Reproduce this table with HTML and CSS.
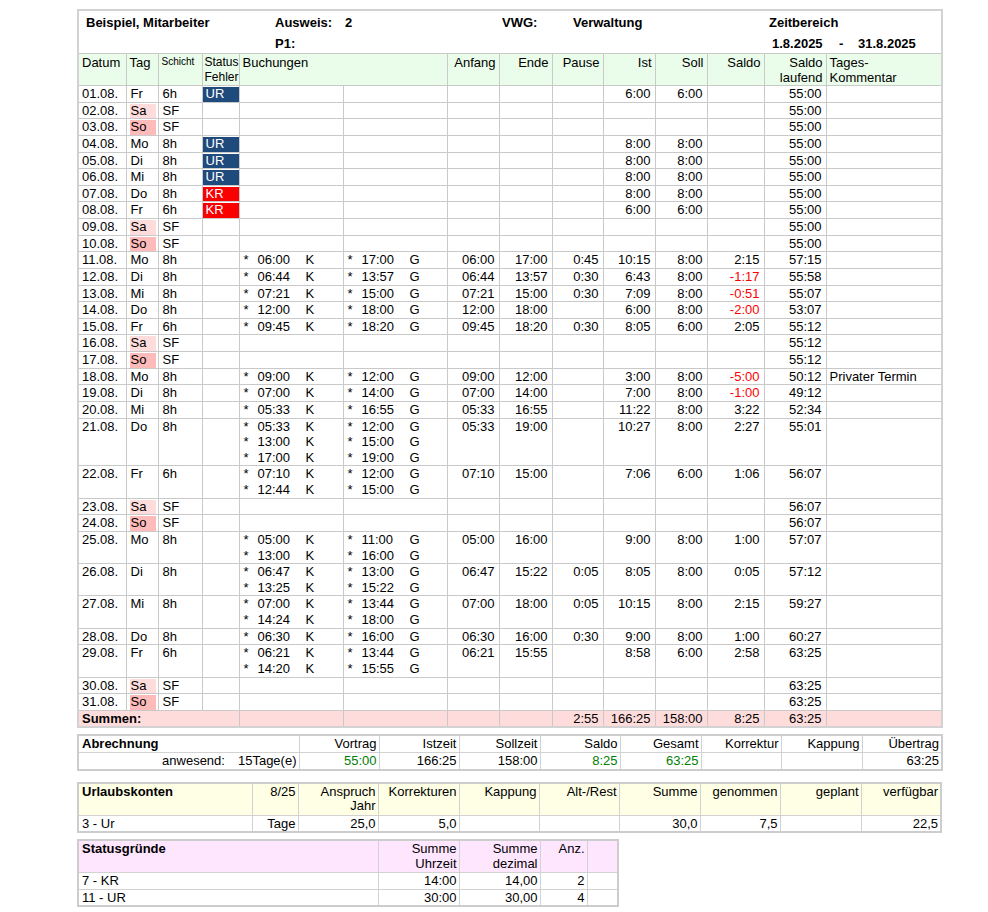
FILE: index.html
```html
<!DOCTYPE html>
<html lang="de">
<head>
<meta charset="utf-8">
<title>Zeitnachweis</title>
<link rel="stylesheet" href="styles.css">
</head>
<body>
<table class="sheet">
<colgroup>
<col class="w48"><col class="w32"><col class="w44"><col class="w37"><col class="w104"><col class="w104"><col class="w52"><col class="w53"><col class="w51"><col class="w52"><col class="w52"><col class="w57"><col class="w62"><col class="w116">
</colgroup>
<tr><td class="head" colspan="14">
  <div class="hrow1"><span>Beispiel, Mitarbeiter</span><span>Ausweis:</span><span>2</span><span>VWG:</span><span>Verwaltung</span><span>Zeitbereich</span></div>
  <div class="hrow2"><span></span><span>P1:</span><span>1.8.2025</span><span>-</span><span>31.8.2025</span></div>
</td></tr>
<tr class="ch">
  <td>Datum</td><td>Tag</td><td class="small">Schicht</td><td class="stat">Status<br>Fehler</td><td colspan="2">Buchungen</td>
  <td class="r">Anfang</td><td class="r">Ende</td><td class="r">Pause</td><td class="r">Ist</td><td class="r">Soll</td><td class="r">Saldo</td><td class="r">Saldo<br>laufend</td><td>Tages-<br>Kommentar</td>
</tr>

<tr><td>01.08.</td><td class="t"><div class="tg">Fr</div></td><td class="s">6h</td><td class="x"><div class="ur">UR</div></td><td></td><td></td><td></td><td></td><td></td><td class="n">6:00</td><td class="n">6:00</td><td></td><td class="n">55:00</td><td></td></tr>
<tr><td>02.08.</td><td class="t"><div class="tg sa">Sa</div></td><td class="s">SF</td><td></td><td></td><td></td><td></td><td></td><td></td><td></td><td></td><td></td><td class="n">55:00</td><td></td></tr>
<tr><td>03.08.</td><td class="t"><div class="tg so">So</div></td><td class="s">SF</td><td></td><td></td><td></td><td></td><td></td><td></td><td></td><td></td><td></td><td class="n">55:00</td><td></td></tr>
<tr><td>04.08.</td><td class="t"><div class="tg">Mo</div></td><td class="s">8h</td><td class="x"><div class="ur">UR</div></td><td></td><td></td><td></td><td></td><td></td><td class="n">8:00</td><td class="n">8:00</td><td></td><td class="n">55:00</td><td></td></tr>
<tr><td>05.08.</td><td class="t"><div class="tg">Di</div></td><td class="s">8h</td><td class="x"><div class="ur">UR</div></td><td></td><td></td><td></td><td></td><td></td><td class="n">8:00</td><td class="n">8:00</td><td></td><td class="n">55:00</td><td></td></tr>
<tr><td>06.08.</td><td class="t"><div class="tg">Mi</div></td><td class="s">8h</td><td class="x"><div class="ur">UR</div></td><td></td><td></td><td></td><td></td><td></td><td class="n">8:00</td><td class="n">8:00</td><td></td><td class="n">55:00</td><td></td></tr>
<tr><td>07.08.</td><td class="t"><div class="tg">Do</div></td><td class="s">8h</td><td class="x"><div class="kr">KR</div></td><td></td><td></td><td></td><td></td><td></td><td class="n">8:00</td><td class="n">8:00</td><td></td><td class="n">55:00</td><td></td></tr>
<tr><td>08.08.</td><td class="t"><div class="tg">Fr</div></td><td class="s">6h</td><td class="x"><div class="kr">KR</div></td><td></td><td></td><td></td><td></td><td></td><td class="n">6:00</td><td class="n">6:00</td><td></td><td class="n">55:00</td><td></td></tr>
<tr><td>09.08.</td><td class="t"><div class="tg sa">Sa</div></td><td class="s">SF</td><td></td><td></td><td></td><td></td><td></td><td></td><td></td><td></td><td></td><td class="n">55:00</td><td></td></tr>
<tr><td>10.08.</td><td class="t"><div class="tg so">So</div></td><td class="s">SF</td><td></td><td></td><td></td><td></td><td></td><td></td><td></td><td></td><td></td><td class="n">55:00</td><td></td></tr>
<tr><td>11.08.</td><td class="t"><div class="tg">Mo</div></td><td class="s">8h</td><td></td>
  <td class="bu"><div class="b"><span>*</span><span>06:00</span><span>K</span></div></td>
  <td class="bu"><div class="b"><span>*</span><span>17:00</span><span>G</span></div></td>
  <td class="n">06:00</td><td class="n">17:00</td><td class="n">0:45</td><td class="n">10:15</td><td class="n">8:00</td><td class="n">2:15</td><td class="n">57:15</td><td></td></tr>
<tr><td>12.08.</td><td class="t"><div class="tg">Di</div></td><td class="s">8h</td><td></td>
  <td class="bu"><div class="b"><span>*</span><span>06:44</span><span>K</span></div></td>
  <td class="bu"><div class="b"><span>*</span><span>13:57</span><span>G</span></div></td>
  <td class="n">06:44</td><td class="n">13:57</td><td class="n">0:30</td><td class="n">6:43</td><td class="n">8:00</td><td class="n neg">-1:17</td><td class="n">55:58</td><td></td></tr>
<tr><td>13.08.</td><td class="t"><div class="tg">Mi</div></td><td class="s">8h</td><td></td>
  <td class="bu"><div class="b"><span>*</span><span>07:21</span><span>K</span></div></td>
  <td class="bu"><div class="b"><span>*</span><span>15:00</span><span>G</span></div></td>
  <td class="n">07:21</td><td class="n">15:00</td><td class="n">0:30</td><td class="n">7:09</td><td class="n">8:00</td><td class="n neg">-0:51</td><td class="n">55:07</td><td></td></tr>
<tr><td>14.08.</td><td class="t"><div class="tg">Do</div></td><td class="s">8h</td><td></td>
  <td class="bu"><div class="b"><span>*</span><span>12:00</span><span>K</span></div></td>
  <td class="bu"><div class="b"><span>*</span><span>18:00</span><span>G</span></div></td>
  <td class="n">12:00</td><td class="n">18:00</td><td></td><td class="n">6:00</td><td class="n">8:00</td><td class="n neg">-2:00</td><td class="n">53:07</td><td></td></tr>
<tr><td>15.08.</td><td class="t"><div class="tg">Fr</div></td><td class="s">6h</td><td></td>
  <td class="bu"><div class="b"><span>*</span><span>09:45</span><span>K</span></div></td>
  <td class="bu"><div class="b"><span>*</span><span>18:20</span><span>G</span></div></td>
  <td class="n">09:45</td><td class="n">18:20</td><td class="n">0:30</td><td class="n">8:05</td><td class="n">6:00</td><td class="n">2:05</td><td class="n">55:12</td><td></td></tr>
<tr><td>16.08.</td><td class="t"><div class="tg sa">Sa</div></td><td class="s">SF</td><td></td><td></td><td></td><td></td><td></td><td></td><td></td><td></td><td></td><td class="n">55:12</td><td></td></tr>
<tr><td>17.08.</td><td class="t"><div class="tg so">So</div></td><td class="s">SF</td><td></td><td></td><td></td><td></td><td></td><td></td><td></td><td></td><td></td><td class="n">55:12</td><td></td></tr>
<tr><td>18.08.</td><td class="t"><div class="tg">Mo</div></td><td class="s">8h</td><td></td>
  <td class="bu"><div class="b"><span>*</span><span>09:00</span><span>K</span></div></td>
  <td class="bu"><div class="b"><span>*</span><span>12:00</span><span>G</span></div></td>
  <td class="n">09:00</td><td class="n">12:00</td><td></td><td class="n">3:00</td><td class="n">8:00</td><td class="n neg">-5:00</td><td class="n">50:12</td><td>Privater Termin</td></tr>
<tr><td>19.08.</td><td class="t"><div class="tg">Di</div></td><td class="s">8h</td><td></td>
  <td class="bu"><div class="b"><span>*</span><span>07:00</span><span>K</span></div></td>
  <td class="bu"><div class="b"><span>*</span><span>14:00</span><span>G</span></div></td>
  <td class="n">07:00</td><td class="n">14:00</td><td></td><td class="n">7:00</td><td class="n">8:00</td><td class="n neg">-1:00</td><td class="n">49:12</td><td></td></tr>
<tr><td>20.08.</td><td class="t"><div class="tg">Mi</div></td><td class="s">8h</td><td></td>
  <td class="bu"><div class="b"><span>*</span><span>05:33</span><span>K</span></div></td>
  <td class="bu"><div class="b"><span>*</span><span>16:55</span><span>G</span></div></td>
  <td class="n">05:33</td><td class="n">16:55</td><td></td><td class="n">11:22</td><td class="n">8:00</td><td class="n">3:22</td><td class="n">52:34</td><td></td></tr>
<tr><td>21.08.</td><td class="t"><div class="tg">Do</div></td><td class="s">8h</td><td></td>
  <td class="bu"><div class="b"><span>*</span><span>05:33</span><span>K</span><span>*</span><span>13:00</span><span>K</span><span>*</span><span>17:00</span><span>K</span></div></td>
  <td class="bu"><div class="b"><span>*</span><span>12:00</span><span>G</span><span>*</span><span>15:00</span><span>G</span><span>*</span><span>19:00</span><span>G</span></div></td>
  <td class="n">05:33</td><td class="n">19:00</td><td></td><td class="n">10:27</td><td class="n">8:00</td><td class="n">2:27</td><td class="n">55:01</td><td></td></tr>
<tr><td>22.08.</td><td class="t"><div class="tg">Fr</div></td><td class="s">6h</td><td></td>
  <td class="bu"><div class="b"><span>*</span><span>07:10</span><span>K</span><span>*</span><span>12:44</span><span>K</span></div></td>
  <td class="bu"><div class="b"><span>*</span><span>12:00</span><span>G</span><span>*</span><span>15:00</span><span>G</span></div></td>
  <td class="n">07:10</td><td class="n">15:00</td><td></td><td class="n">7:06</td><td class="n">6:00</td><td class="n">1:06</td><td class="n">56:07</td><td></td></tr>
<tr><td>23.08.</td><td class="t"><div class="tg sa">Sa</div></td><td class="s">SF</td><td></td><td></td><td></td><td></td><td></td><td></td><td></td><td></td><td></td><td class="n">56:07</td><td></td></tr>
<tr><td>24.08.</td><td class="t"><div class="tg so">So</div></td><td class="s">SF</td><td></td><td></td><td></td><td></td><td></td><td></td><td></td><td></td><td></td><td class="n">56:07</td><td></td></tr>
<tr><td>25.08.</td><td class="t"><div class="tg">Mo</div></td><td class="s">8h</td><td></td>
  <td class="bu"><div class="b"><span>*</span><span>05:00</span><span>K</span><span>*</span><span>13:00</span><span>K</span></div></td>
  <td class="bu"><div class="b"><span>*</span><span>11:00</span><span>G</span><span>*</span><span>16:00</span><span>G</span></div></td>
  <td class="n">05:00</td><td class="n">16:00</td><td></td><td class="n">9:00</td><td class="n">8:00</td><td class="n">1:00</td><td class="n">57:07</td><td></td></tr>
<tr><td>26.08.</td><td class="t"><div class="tg">Di</div></td><td class="s">8h</td><td></td>
  <td class="bu"><div class="b"><span>*</span><span>06:47</span><span>K</span><span>*</span><span>13:25</span><span>K</span></div></td>
  <td class="bu"><div class="b"><span>*</span><span>13:00</span><span>G</span><span>*</span><span>15:22</span><span>G</span></div></td>
  <td class="n">06:47</td><td class="n">15:22</td><td class="n">0:05</td><td class="n">8:05</td><td class="n">8:00</td><td class="n">0:05</td><td class="n">57:12</td><td></td></tr>
<tr><td>27.08.</td><td class="t"><div class="tg">Mi</div></td><td class="s">8h</td><td></td>
  <td class="bu"><div class="b"><span>*</span><span>07:00</span><span>K</span><span>*</span><span>14:24</span><span>K</span></div></td>
  <td class="bu"><div class="b"><span>*</span><span>13:44</span><span>G</span><span>*</span><span>18:00</span><span>G</span></div></td>
  <td class="n">07:00</td><td class="n">18:00</td><td class="n">0:05</td><td class="n">10:15</td><td class="n">8:00</td><td class="n">2:15</td><td class="n">59:27</td><td></td></tr>
<tr><td>28.08.</td><td class="t"><div class="tg">Do</div></td><td class="s">8h</td><td></td>
  <td class="bu"><div class="b"><span>*</span><span>06:30</span><span>K</span></div></td>
  <td class="bu"><div class="b"><span>*</span><span>16:00</span><span>G</span></div></td>
  <td class="n">06:30</td><td class="n">16:00</td><td class="n">0:30</td><td class="n">9:00</td><td class="n">8:00</td><td class="n">1:00</td><td class="n">60:27</td><td></td></tr>
<tr><td>29.08.</td><td class="t"><div class="tg">Fr</div></td><td class="s">6h</td><td></td>
  <td class="bu"><div class="b"><span>*</span><span>06:21</span><span>K</span><span>*</span><span>14:20</span><span>K</span></div></td>
  <td class="bu"><div class="b"><span>*</span><span>13:44</span><span>G</span><span>*</span><span>15:55</span><span>G</span></div></td>
  <td class="n">06:21</td><td class="n">15:55</td><td></td><td class="n">8:58</td><td class="n">6:00</td><td class="n">2:58</td><td class="n">63:25</td><td></td></tr>
<tr><td>30.08.</td><td class="t"><div class="tg sa">Sa</div></td><td class="s">SF</td><td></td><td></td><td></td><td></td><td></td><td></td><td></td><td></td><td></td><td class="n">63:25</td><td></td></tr>
<tr><td>31.08.</td><td class="t"><div class="tg so">So</div></td><td class="s">SF</td><td></td><td></td><td></td><td></td><td></td><td></td><td></td><td></td><td></td><td class="n">63:25</td><td></td></tr>
<tr class="sum"><td colspan="4" class="bold">Summen:</td><td></td><td></td><td></td><td></td><td class="n">2:55</td><td class="n">166:25</td><td class="n">158:00</td><td class="n">8:25</td><td class="n">63:25</td><td></td></tr>
</table>

<table class="tbl abr">
<colgroup><col class="w221"><col class="w80"><col class="w80"><col class="w81"><col class="w80"><col class="w81"><col class="w80"><col class="w81"><col class="w80"></colgroup>
<tr><td class="bold">Abrechnung</td><td class="n">Vortrag</td><td class="n">Istzeit</td><td class="n">Sollzeit</td><td class="n">Saldo</td><td class="n">Gesamt</td><td class="n">Korrektur</td><td class="n">Kappung</td><td class="n">Übertrag</td></tr>
<tr><td class="n">anwesend:<span class="days">15Tage(e)</span></td><td class="n pos">55:00</td><td class="n">166:25</td><td class="n">158:00</td><td class="n pos">8:25</td><td class="n pos">63:25</td><td></td><td></td><td class="n">63:25</td></tr>
</table>

<table class="tbl url">
<colgroup><col class="w174"><col class="w46"><col class="w80"><col class="w81"><col class="w80"><col class="w80"><col class="w81"><col class="w80"><col class="w81"><col class="w80"></colgroup>
<tr class="yh"><td class="bold">Urlaubskonten</td><td class="n">8/25</td><td class="n">Anspruch<br>Jahr</td><td class="n">Korrekturen</td><td class="n">Kappung</td><td class="n">Alt-/Rest</td><td class="n">Summe</td><td class="n">genommen</td><td class="n">geplant</td><td class="n">verfügbar</td></tr>
<tr><td>3 - Ur</td><td class="n">Tage</td><td class="n">25,0</td><td class="n">5,0</td><td></td><td></td><td class="n">30,0</td><td class="n">7,5</td><td></td><td class="n">22,5</td></tr>
</table>

<table class="tbl stg">
<colgroup><col class="w300"><col class="w81"><col class="w81"><col class="w47"><col class="w31"></colgroup>
<tr class="ph"><td class="bold">Statusgründe</td><td class="n">Summe<br>Uhrzeit</td><td class="n">Summe<br>dezimal</td><td class="n">Anz.</td><td></td></tr>
<tr><td>7 - KR</td><td class="n">14:00</td><td class="n">14,00</td><td class="n">2</td><td></td></tr>
<tr><td>11 - UR</td><td class="n">30:00</td><td class="n">30,00</td><td class="n">4</td><td></td></tr>
</table>
</body>
</html>
```

FILE: styles.css
```css
html, body {
  margin: 0;
  background: #ffffff;
}
body {
  padding: 9px 0 0 77px;
  font-family: "Liberation Sans", Arial, sans-serif;
  font-size: 13px;
  color: #000000;
}

.w31 { width: 31px; } .w32 { width: 32px; } .w37 { width: 37px; } .w44 { width: 44px; }
.w46 { width: 46px; } .w47 { width: 47px; } .w48 { width: 48px; } .w51 { width: 51px; }
.w52 { width: 52px; } .w53 { width: 53px; } .w57 { width: 57px; } .w62 { width: 62px; }
.w80 { width: 80px; } .w81 { width: 81px; } .w104 { width: 104px; } .w116 { width: 116px; }
.w174 { width: 174px; } .w221 { width: 221px; } .w300 { width: 300px; }

.sheet {
  border-collapse: collapse;
  table-layout: fixed;
  width: 865px;
  border: 2px solid #d2d2d2;
}
.sheet td {
  border: 1px solid #c9c9c9;
  padding: 0 3px;
  line-height: 15.62px;
  vertical-align: top;
  white-space: nowrap;
  overflow: hidden;
}
.sheet td.head {
  padding: 4px 0 0 7px;
  height: 38px;
  font-weight: bold;
  line-height: 16px;
  border-bottom: 1px solid #c9c9c9;
}
.hrow1 {
  display: grid;
  grid-template-columns: 189px 70px 157px 71px 196px auto;
}
.hrow2 {
  display: grid;
  grid-template-columns: 189px 497px 67px 19px auto;
  margin-top: 5px;
}

.sheet tr.ch td {
  background: #eafcea;
  line-height: 15px;
  padding-top: 1px;
  height: 30px;
}
.sheet tr.ch td.small {
  font-size: 10px;
  line-height: 13px;
}
.sheet tr.ch td.stat {
  font-size: 12px;
  padding: 1px 0 0 2px;
}
.sheet td.r, .sheet td.n, .tbl td.n { text-align: right; }
.sheet td.n { padding-right: 4px; }
.sheet td.t, .sheet td.x { padding: 0; }
.sheet td.s { padding-left: 4px; }

.tg {
  margin: 1px 2px 0 3px;
  padding-left: 1px;
  line-height: 14.62px;
}
.tg.sa { background: #ffdcdc; }
.tg.so { background: #ffbaba; }

.ur, .kr {
  margin-top: 1px;
  padding-left: 3px;
  line-height: 14.62px;
  color: #ffffff;
}
.ur { background: #1f4a7c; }
.kr { background: #fa0000; }

.sheet td.bu { padding-left: 4px; }
.b {
  display: grid;
  grid-template-columns: 14px 48px auto;
}

.neg { color: #ff0000; }
.pos { color: #008000; }
.bold { font-weight: bold; }

.sheet tr.sum td { background: #ffdcdc; }

.tbl {
  border-collapse: collapse;
  table-layout: fixed;
  border: 2px solid #cdcdcd;
}
.tbl td {
  border: 1px solid #d2d2d2;
  padding: 1px 2px 0 3px;
  line-height: 14.6px;
  vertical-align: top;
  white-space: nowrap;
  overflow: hidden;
}
.abr { width: 865px; margin-top: 6px; }
.url { width: 864px; margin-top: 11px; }
.stg { width: 541px; margin-top: 6px; }
.days { margin-left: 13px; }
.url tr.yh td { background: #ffffe6; height: 30px; }
.stg tr.ph td { background: #ffe6ff; height: 30px; }
```
